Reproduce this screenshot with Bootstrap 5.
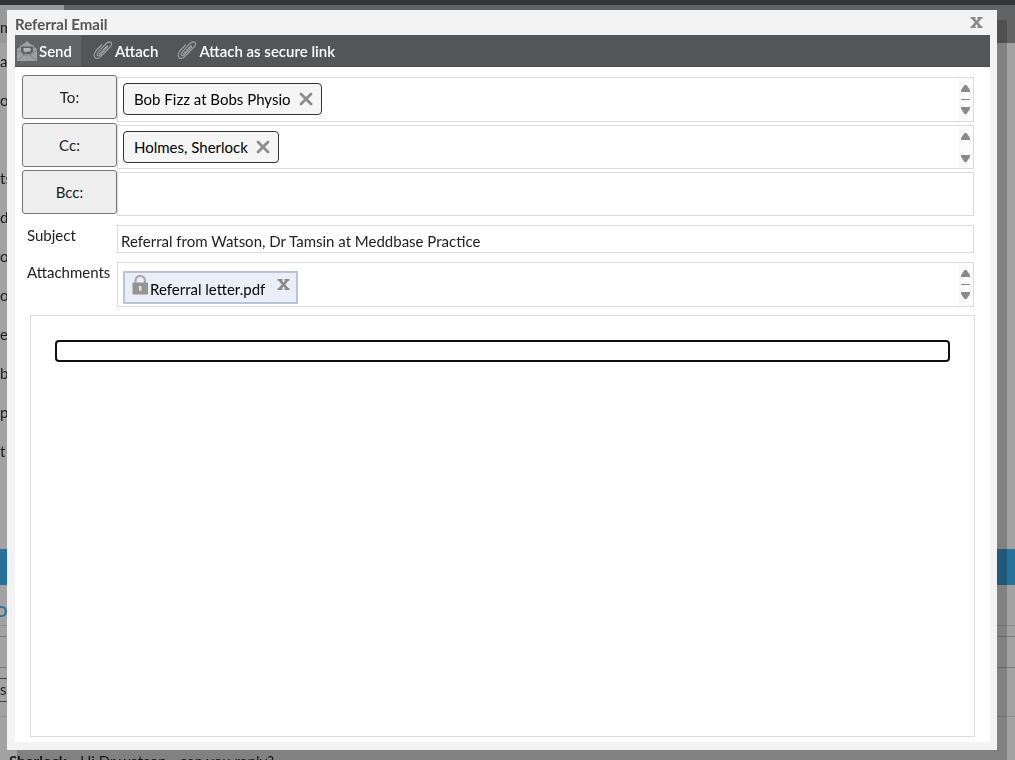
<!DOCTYPE html>
<html lang="en">
<head>
<meta charset="utf-8">
<meta name="viewport" content="width=device-width, initial-scale=1">
<title>Referral Email</title>
<link href="https://cdn.jsdelivr.net/npm/bootstrap@5.3.0/dist/css/bootstrap.min.css" rel="stylesheet">
<style>
body { font-family: Lato, "Liberation Sans", sans-serif; font-size: 15px; line-height: 20px; color: #222; background: #a2a2a2; }

/* dimmed page behind the dialog */
.backdrop-page { z-index: 0; color: #1c1c1c; }
.page-top { height: 5px; background: #333436; }
.page-tabs { height: 38px; background: #636363; }
.page-tab { width: 64px; background: #999; line-height: 45px; }
.page-menu { height: 506px; }
.page-menu li { height: 39px; line-height: 37px; }
.page-band { height: 36px; background: #27719b; }
.page-heading { height: 41px; line-height: 52px; color: #27719b; font-weight: 700; text-indent: -4px; border-bottom: 1px solid #8c8c8c; }
.page-filter { height: 32px; margin-top: 10px; border-top: 1px solid #7c7c7c; border-bottom: 1px solid #7c7c7c; }
.page-field { width: 300px; height: 24px; margin-top: 10px; border: solid #444; border-width: 1px 0; }
.page-rule { height: 15px; border-bottom: 1px solid #8c8c8c; }
.page-message { padding: 34px 0 0 9px; white-space: pre; }

/* dialog */
.mail-window { z-index: 1; margin: 10px 18px 10px 7px; min-height: calc(100vh - 20px); padding: 0 7px 8px 8px; background: #f3f3f3; box-shadow: 10px 10px 0 rgba(0,0,0,.2); }
.mail-title { height: 25px; padding-right: 7px; }
.mail-title h1 { font-size: 15px; line-height: 28px; font-weight: 700; color: #555; }
.plain-btn { border: 0; padding: 0; background: none; display: flex; }
.mail-title .plain-btn { padding-top: 7px; }
.mail-tools { height: 32px; background: #545557; border-bottom: 1px solid #4b4b4e; }
.mail-tools button { border: 0; background: none; color: #fff; font-weight: 600; padding: 0 7px 0 8px; gap: 2px; }
.mail-tools button.is-active { background: #636466; padding: 0 9px 0 2px; }
.mail-form { padding: 8px 16px 5px 7px; background: #fff; }
.mail-row { margin-bottom: 1px; }
.mail-label { width: 95px; flex: none; }
button.mail-label { height: 44px; border: 1px solid #767676; border-radius: 3px; background: #efefef; color: #222; }
label.mail-label, span.mail-label { padding-left: 5px; }
.mail-box { min-width: 0; border: 1px solid #dcdcdc; background: #fff; color: #222; outline: 0; }
.tall-box { height: 45px; padding-left: 5px; margin-top: 2px; }
.mail-row + .mail-row .tall-box { height: 44px; }
.subject-row { margin-top: 8px; }
.subject-box { height: 28px; padding: 3px 3px 0; }
.files-row { margin-top: 9px; }
.files-row .tall-box { margin-top: 0; }
.chip { height: 32px; margin-top: 5px; padding: 0 8px 0 10px; gap: 8px; border: 1px solid #333; border-radius: 4px; background: #f5f5f5; color: #000; }
.file-chip { height: 33px; margin-top: 8px; padding: 0 6px; border: 2px solid #bac4d8; background: #ebeef7; color: #000; }
.file-chip a { color: #000; text-decoration: none; padding-top: 6px; }
.file-chip .lock { margin-top: 1px; }
.file-chip .plain-btn { margin: 6px 0 0 12px; }
.scroller { width: 15px; background: #fbfbfb; }
.editor { margin: 8px 0 0 8px; padding: 24px; border: 1px solid #dcdcdc; width: calc(100% - 7px); }
.editor textarea { height: 22px; border: 2px solid #101010; border-radius: 4px; resize: none; outline: 0; overflow: hidden; padding: 0 4px; line-height: 18px; }
</style>
</head>
<body>
<svg class="d-none" aria-hidden="true">
  <symbol id="clip" viewBox="0 0 21 20"><g fill="none" stroke="#aaa" stroke-width="1.1" stroke-linecap="round" stroke-linejoin="round"><path d="M9 4 3 10.500C.5 13.500.5 17 3 18.200c2.300 1 4.500-.8 6-2.400l9-9.600c2-2.400 2-4.200.5-5-2-.9-4 .6-5.500 2.200L5.500 11.600c-1.800 2.200-1.500 4 .2 4.100 1.200 0 2.200-1 3-1.900L15.500 6"/><path d="m6.500 13.800 8.500-9"/></g></symbol>
  <symbol id="cross" viewBox="0 0 14 14"><path d="m2 2 10 10M12 2 2 12" stroke="#8d8d8d" stroke-width="2.800" stroke-linecap="round"/></symbol>
  <symbol id="smallcross" viewBox="0 0 12 11"><path d="M0 0h5v1.800h-.5L6 3.700l1.500-1.900H7V0h5v1.800h-1.200L7.800 5.400l3.300 3.800H12V11H7V9.200h.5L6 7.300 4.500 9.200H5V11H0V9.200h.9l3.300-3.800-3-3.600H0z" fill="#8a8a8a"/></symbol>
  <symbol id="arrows" viewBox="0 0 11 31"><path d="M4.500 1h2L10 6v2H1V6zM1 23h9v2l-3.500 5h-2L1 25z" fill="#8b8b8b"/></symbol>
</svg>

<div class="backdrop-page position-fixed top-0 start-0 w-100 h-100 overflow-hidden" aria-hidden="true">
  <div class="page-top"></div>
  <div class="page-tabs d-flex"><div class="page-tab">m</div></div>
  <ul class="page-menu list-unstyled mb-0">
    <li>a</li><li>on</li><li></li><li>ts</li><li>d</li><li>o</li><li>o</li><li>ep</li><li>b</li><li>p</li><li>t</li>
  </ul>
  <div class="page-band"></div>
  <div class="page-heading">D</div>
  <div class="page-filter"></div>
  <div class="page-field">s</div>
  <div class="page-rule"></div>
  <div class="page-message"><b>Sherlock</b> - Hi Dr watson - can you reply?</div>
</div>

<main class="mail-window position-relative d-flex flex-column" role="dialog" aria-labelledby="dialogTitle">
  <header class="mail-title d-flex justify-content-between">
    <h1 id="dialogTitle" class="m-0">Referral Email</h1>
    <button type="button" class="plain-btn" aria-label="Close"><svg width="13" height="11"><use href="#smallcross"/></svg></button>
  </header>
  <div class="mail-tools d-flex" role="toolbar" aria-label="Email">
    <button type="button" class="is-active d-flex align-items-center">
      <svg width="20" height="20" viewBox="0 0 20 20"><path d="M0 8 3 6V5l5-3 2-2 2 2 5 3v1l3 2v12H0z" fill="#a0a0a0"/><path d="M4 5.500h12v4.800L13.500 13h-7L4 10.300z" fill="#5e5e60"/><path d="M6.500 7h7v3.500H10L8.500 12v-1.500h-2z" fill="#b5b5b5"/><path d="m0 9 7 5-6 5M20 9l-7 5 6 5M7 14h6" fill="none" stroke="#818181"/></svg>
      <span>Send</span>
    </button>
    <button type="button" class="d-flex align-items-center ms-1"><svg width="20" height="19"><use href="#clip"/></svg><span>Attach</span></button>
    <button type="button" class="d-flex align-items-center ms-1"><svg width="20" height="19"><use href="#clip"/></svg><span>Attach as secure link</span></button>
  </div>
  <form class="mail-form flex-grow-1 d-flex flex-column">
    <div class="mail-row d-flex">
      <button type="button" class="mail-label">To:</button>
      <div class="mail-box tall-box flex-grow-1 d-flex">
        <div class="chip d-flex align-items-center"><span>Bob Fizz at Bobs Physio</span><button type="button" class="plain-btn" aria-label="Remove Bob Fizz"><svg width="14" height="14"><use href="#cross"/></svg></button></div>
        <div class="scroller ms-auto d-flex justify-content-center align-items-center"><svg width="11" height="31"><use href="#arrows"/><path d="M1 15.500h9" stroke="#8b8b8b"/></svg></div>
      </div>
    </div>
    <div class="mail-row d-flex">
      <button type="button" class="mail-label">Cc:</button>
      <div class="mail-box tall-box flex-grow-1 d-flex">
        <div class="chip d-flex align-items-center"><span>Holmes, Sherlock</span><button type="button" class="plain-btn" aria-label="Remove Sherlock Holmes"><svg width="14" height="14"><use href="#cross"/></svg></button></div>
        <div class="scroller ms-auto d-flex justify-content-center align-items-center"><svg width="11" height="31"><use href="#arrows"/></svg></div>
      </div>
    </div>
    <div class="mail-row d-flex">
      <button type="button" class="mail-label">Bcc:</button>
      <input type="text" class="mail-box tall-box flex-grow-1" aria-label="Bcc">
    </div>
    <div class="subject-row d-flex">
      <label class="mail-label" for="subject">Subject</label>
      <input type="text" id="subject" class="mail-box subject-box flex-grow-1" value="Referral from Watson, Dr Tamsin at Meddbase Practice">
    </div>
    <div class="files-row d-flex">
      <span class="mail-label">Attachments</span>
      <div class="mail-box tall-box flex-grow-1 d-flex">
        <div class="file-chip d-flex align-items-start">
          <svg class="lock" width="19" height="21" viewBox="0 0 19 21"><path d="M4.500 10V6.500a4.700 4.700 0 0 1 9.400 0V10" fill="none" stroke="#aaa" stroke-width="2.200"/><rect x="1.500" y="8.500" width="15.500" height="12" rx="1" fill="#949494"/><path d="M8 12h2.500v5H8z" fill="#ddd"/></svg>
          <a href="#">Referral letter.pdf</a>
          <button type="button" class="plain-btn" aria-label="Remove attachment"><svg width="13" height="11"><use href="#smallcross"/></svg></button>
        </div>
        <div class="scroller ms-auto d-flex justify-content-center align-items-center"><svg width="11" height="31"><use href="#arrows"/><path d="M1 15.500h9" stroke="#8b8b8b"/></svg></div>
      </div>
    </div>
    <div class="editor flex-grow-1"><textarea class="d-block w-100" rows="1" aria-label="Message"></textarea></div>
  </form>
</main>
<script src="https://cdn.jsdelivr.net/npm/bootstrap@5.3.0/dist/js/bootstrap.bundle.min.js"></script>
</body>
</html>
